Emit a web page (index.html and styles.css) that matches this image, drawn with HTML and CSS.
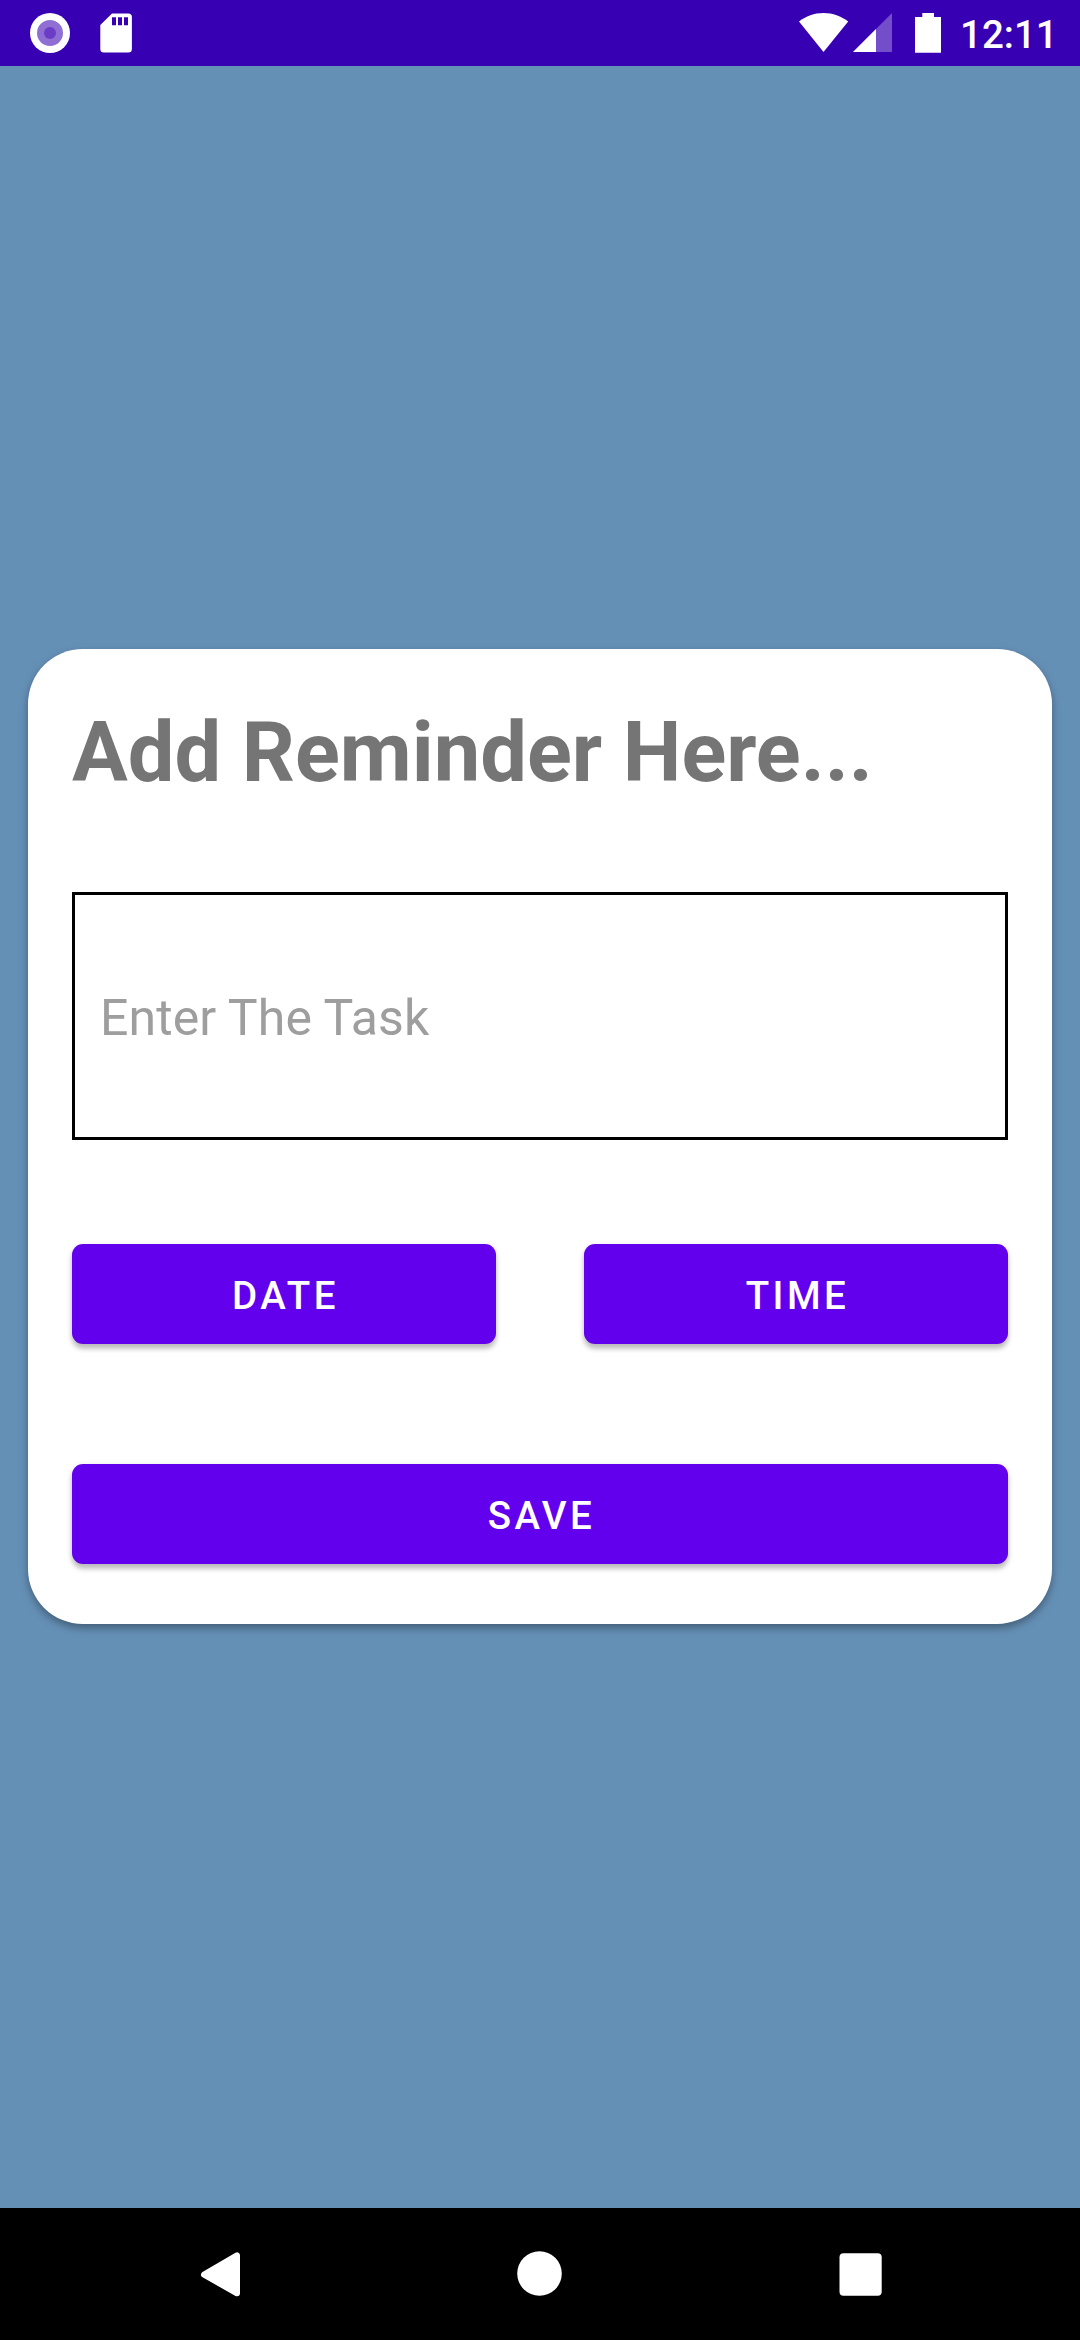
FILE: index.html
```html
<!DOCTYPE html>
<html lang="en">
<head>
<meta charset="utf-8">
<title>Add Reminder</title>
<link rel="stylesheet" href="styles.css">
</head>
<body>
<div class="screen">
  <header class="status-bar">
    <svg class="status-icons" width="140" height="66" viewBox="0 0 140 66">
      <circle cx="50" cy="33" r="20" fill="#fff"/>
      <circle cx="50" cy="33" r="13" fill="#8f6fd3"/>
      <circle cx="50" cy="33" r="6" fill="#6b3dc6"/>
      <path fill="#fff" fill-rule="evenodd" d="M112 13.4h16.3a3.6 3.6 0 0 1 3.6 3.6v32a3.6 3.6 0 0 1-3.6 3.6h-24.400a3.600 3.600 0 0 1-3.600-3.600V25zM112 17.200v8h4v-8zM118 17.200v8h4v-8zM124 17.200v8h4v-8z"/>
    </svg>
    <div class="status-right">
      <svg class="status-icons" width="150" height="66" viewBox="0 0 150 66">
        <path fill="#fff" d="M5 21.600C12 16 20 13 29.500 13S47 16 54.200 21.600L29.500 52z"/>
        <path fill="#fff" fill-opacity=".3" d="M98 13v39H59z"/>
        <path fill="#fff" d="M82 29v23H59z"/>
        <path fill="#fff" d="M128.300 13h11.700v4h7v35.700h-26V17h7.300z"/>
      </svg>
      <span class="clock">12:11</span>
    </div>
  </header>
  <main class="content">
    <section class="card">
      <h1 class="title">Add Reminder Here...</h1>
      <input class="task-input" type="text" placeholder="Enter The Task">
      <div class="picker-row">
        <button class="button">DATE</button>
        <button class="button">TIME</button>
      </div>
      <button class="button">SAVE</button>
    </section>
  </main>
  <nav class="nav-bar">
    <svg width="80" height="80" viewBox="0 0 80 80"><path fill="#fff" stroke="#fff" stroke-width="6" stroke-linejoin="round" d="M57 21.300v38L24 40.700z"/></svg>
    <svg width="80" height="80" viewBox="0 0 80 80"><circle cx="39.500" cy="39.500" r="22.300" fill="#fff"/></svg>
    <svg width="80" height="80" viewBox="0 0 80 80"><rect x="19.500" y="19.300" width="42.200" height="42.400" rx="4" fill="#fff"/></svg>
  </nav>
</div>
</body>
</html>
```
FILE: styles.css
```css
* {
  box-sizing: border-box;
}

body {
  margin: 0;
  font-family: Roboto, "Liberation Sans", sans-serif;
}

.screen {
  display: flex;
  flex-direction: column;
  width: 1080px;
  height: 2340px;
  background: #6590b6;
}

.status-bar {
  display: flex;
  justify-content: space-between;
  height: 66px;
  background: #3700b3;
}

.status-icons {
  display: block;
}

.status-right {
  display: flex;
  width: 286px;
}

.clock {
  padding-left: 16px;
  font-size: 38.5px;
  font-weight: 500;
  line-height: 69px;
  color: #fff;
}

.content {
  display: flex;
  flex: 1;
  flex-direction: column;
  padding: 583px 28px 0;
}

.card {
  display: flex;
  flex-direction: column;
  height: 975px;
  padding: 44px;
  border-radius: 55px;
  background: #fff;
  box-shadow: 0 4px 9px rgba(0, 0, 0, 0.35);
}

.title {
  height: 110px;
  margin: 0 0 89px;
  font-size: 83px;
  font-weight: 700;
  line-height: 120px;
  color: #757575;
}

.task-input {
  height: 248px;
  padding: 4px 25px 0;
  border: 3px solid #000;
  border-radius: 0;
  background: #fff;
  font: 400 50px Roboto, "Liberation Sans", sans-serif;
  letter-spacing: 0.1px;
  color: #212121;
}

.task-input::placeholder {
  color: #9e9e9e;
  opacity: 1;
}

.picker-row {
  display: flex;
  gap: 88px;
  margin: 104px 0 120px;
}

.picker-row .button {
  flex: 1;
}

.button {
  height: 100px;
  padding: 2px 0 0 3px;
  border: 0;
  border-radius: 11px;
  background: #6200ee;
  box-shadow: 0 5px 5px rgba(0, 0, 0, 0.22), 0 1px 6px rgba(0, 0, 0, 0.1);
  font: 500 38.5px Roboto, "Liberation Sans", sans-serif;
  letter-spacing: 3.44px;
  color: #fff;
}

.nav-bar {
  display: flex;
  justify-content: space-between;
  height: 132px;
  padding: 26px 180px;
  background: #000;
}
```
